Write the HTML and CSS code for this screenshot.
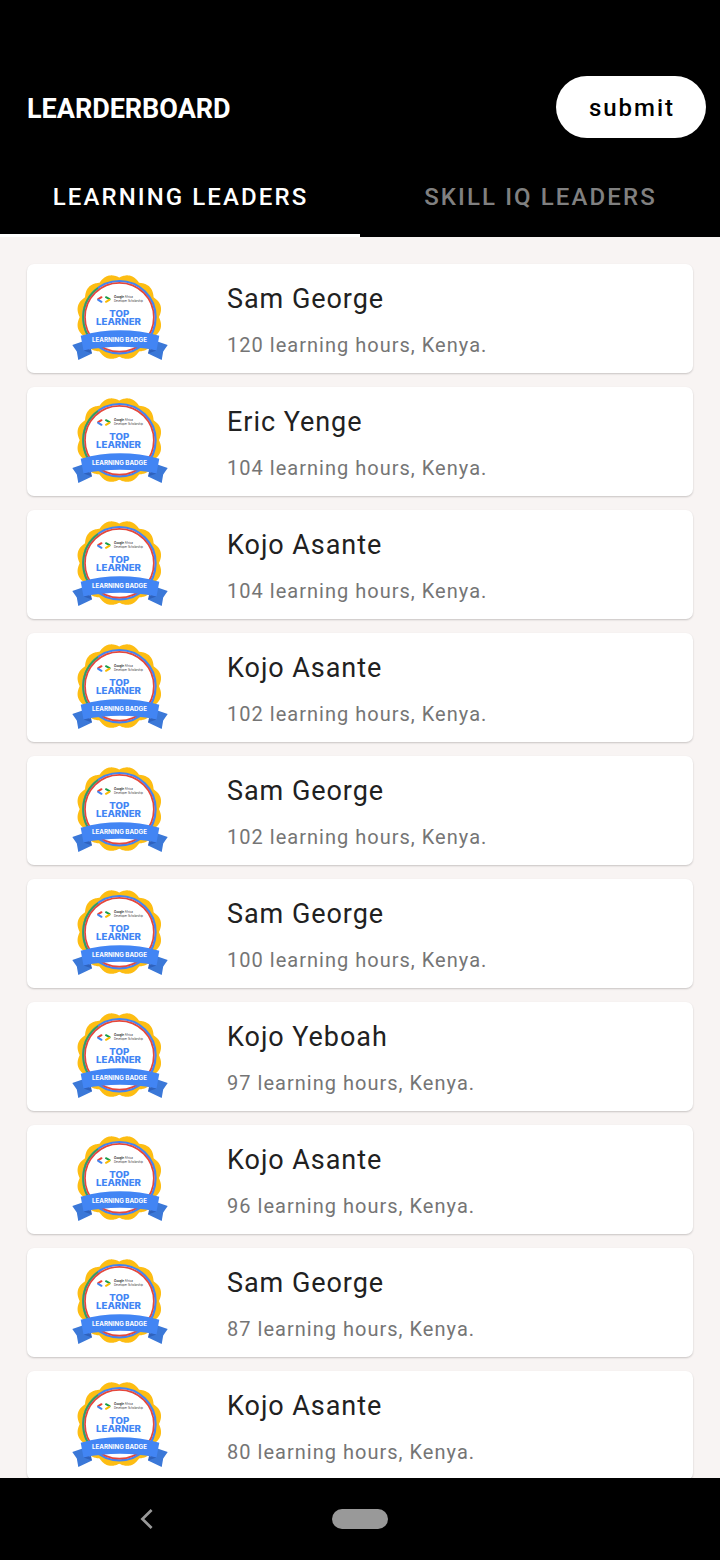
FILE: index.html
```html
<!DOCTYPE html>
<html lang="en">
<head>
<meta charset="utf-8">
<title>Learderboard</title>
<link rel="stylesheet" href="styles.css">
</head>
<body>
<div class="app">
  <header class="header">
    <div class="toolbar">
      <h1 class="title">LEARDERBOARD</h1>
      <button class="submit">submit</button>
    </div>
    <nav class="tabs">
      <a class="tab tab-active">LEARNING LEADERS</a>
      <a class="tab">SKILL IQ LEADERS</a>
    </nav>
  </header>
  <main class="list" id="list"></main>
  <footer class="navbar">
    <svg class="back" viewBox="0 0 14 20"><path d="M11.600 1L2.400 10l9.200 9" fill="none" stroke="#999" stroke-width="2.700"/></svg>
    <span class="home"></span>
  </footer>
</div>
<template id="row">
  <article class="card">
    <svg class="badge" viewBox="0 0 120 110">
      <path class="scallop" fill="#fdbd13"/>
      <circle cx="59.400" cy="52.200" r="36.200" fill="#fff" stroke="#4285f4" stroke-width="2.200"/>
      <path d="M38 23A36.200 36.200 0 0 0 36 79.800" fill="none" stroke="#34a35a" stroke-width="1.800"/>
      <circle cx="59.400" cy="52.200" r="34.400" fill="#fff" stroke="#e5473b" stroke-width="1.700"/>
      <path d="M41.500 32.200l-3.300 2" stroke="#ea4335" stroke-width="2" stroke-linecap="round"/>
      <path d="M38.200 34.800l3.300 2" stroke="#4285f4" stroke-width="2" stroke-linecap="round"/>
      <path d="M46 32.200l3.600 2" stroke="#1b9e4b" stroke-width="2" stroke-linecap="round"/>
      <path d="M49.300 34.800l-3.300 2" stroke="#fbbc04" stroke-width="2" stroke-linecap="round"/>
      <text class="tiny" x="54" y="33.400" textLength="19" lengthAdjust="spacingAndGlyphs"><tspan font-weight="700">Google</tspan> Africa</text>
      <text class="tiny" x="54" y="36.800" textLength="29" lengthAdjust="spacingAndGlyphs">Developer Scholarship</text>
      <text class="top" x="59.300" y="52.400" textLength="20" lengthAdjust="spacingAndGlyphs">TOP</text>
      <text class="top" x="58.500" y="60.200" textLength="45" lengthAdjust="spacingAndGlyphs">LEARNER</text>
      <path d="M12.300 80L24 76l8 12.500L18.300 95l-1.500-8.500zM107.700 80L96 76l-8 12.500 13.700 6.500 1.500-8.500z" fill="#3b78d8"/>
      <path d="M20.700 70.700Q60 60 99.300 70.700L96.500 85.500Q60 78 23.500 85.500z" fill="#4285f4"/>
      <path d="M23.500 85.500l7.500-1.400 1 4.400zM96.500 85.500L89 84.100l-1 4.400z" fill="#2f62bd"/>
      <text class="ribbon" x="59.500" y="76.600" textLength="55" lengthAdjust="spacingAndGlyphs">LEARNING BADGE</text>
    </svg>
    <div class="info">
      <h2 class="name"></h2>
      <p class="detail"></p>
    </div>
  </article>
</template>
<script src="app.js"></script>
</body>
</html>
```
FILE: styles.css
```css
* { box-sizing: border-box; }
body { margin: 0; font-family: Roboto, sans-serif; background: #000; }
.app { width: 720px; height: 1560px; display: flex; flex-direction: column; overflow: hidden; background: #f8f4f3; }
.header { background: #000; height: 237px; flex: none; padding-top: 76px; }
.toolbar { display: flex; justify-content: space-between; align-items: center; height: 62px; padding: 0 14px 0 27px; }
.title { margin: 4px 0 0; color: #fff; font-size: 27px; font-weight: 700; letter-spacing: -0.02px; line-height: 32px; }
.submit { width: 150px; height: 62px; padding: 2px 0 0 2px; border: 0; border-radius: 31px; background: #fff; color: #000; font: 500 24px Roboto, sans-serif; letter-spacing: 2px; }
.tabs { display: flex; height: 99px; }
.tab { flex: 1; text-align: center; padding: 17px 0 0 1px; height: 99px; color: #808080; font-size: 24px; font-weight: 500; letter-spacing: 2.1px; line-height: 84px; border-bottom: 3px solid transparent; }
.tab-active { color: #fff; border-bottom-color: #fff; }
.list { flex: 1; min-height: 0; overflow: hidden; padding: 27px 27px 0; display: flex; flex-direction: column; gap: 14px; }
.card { flex: none; display: flex; height: 109px; background: #fff; border-radius: 7px; box-shadow: 0 1px 2px rgba(0, 0, 0, .2); overflow: hidden; padding-left: 33px; }
.badge { width: 120px; height: 110px; margin-top: 1px; flex: none; }
.info { padding: 18px 0 0 47px; }
.name { margin: 0; font-size: 27px; font-weight: 400; letter-spacing: 0.95px; line-height: 34px; color: #212121; }
.detail { margin: 17px 0 0; font-size: 20px; letter-spacing: 1.02px; line-height: 24px; color: #757575; }
.tiny { font: 3.1px Inter, sans-serif; fill: #333; }
.top { font: 800 8.4px Inter, sans-serif; fill: #4285f4; text-anchor: middle; }
.ribbon { font: 700 5.7px Inter, sans-serif; fill: #fff; text-anchor: middle; }
.navbar { flex: none; height: 82px; background: #000; display: flex; align-items: center; padding-left: 140px; }
.back { width: 14px; height: 20px; }
.home { width: 56px; height: 20px; margin-left: 178px; border-radius: 10px; background: #999; }
```
FILE: app.js
```js
const leaders = [
  ["Sam George", 120], ["Eric Yenge", 104], ["Kojo Asante", 104], ["Kojo Asante", 102],
  ["Sam George", 102], ["Sam George", 100], ["Kojo Yeboah", 97], ["Kojo Asante", 96],
  ["Sam George", 87], ["Kojo Asante", 80]
];

// Wavy outline of the badge: one bump for each twelfth of the circle.
function scallop(cx, cy, inner, depth, bumps) {
  let d = "";
  for (let i = 0; i < 360; i++) {
    const a = i * Math.PI / 180;
    const r = inner + depth * Math.abs(Math.sin(a * bumps / 2));
    d += (i ? "L" : "M") + (cx + r * Math.sin(a)).toFixed(2) + " " + (cy - r * Math.cos(a)).toFixed(2);
  }
  return d + "z";
}

const outline = scallop(59.3, 52.1, 39.6, 3.2, 12);
const template = document.getElementById("row");
for (const [name, hours] of leaders) {
  const row = template.content.cloneNode(true);
  row.querySelector(".scallop").setAttribute("d", outline);
  row.querySelector(".name").textContent = name;
  row.querySelector(".detail").textContent = `${hours} learning hours, Kenya.`;
  document.getElementById("list").append(row);
}
```
